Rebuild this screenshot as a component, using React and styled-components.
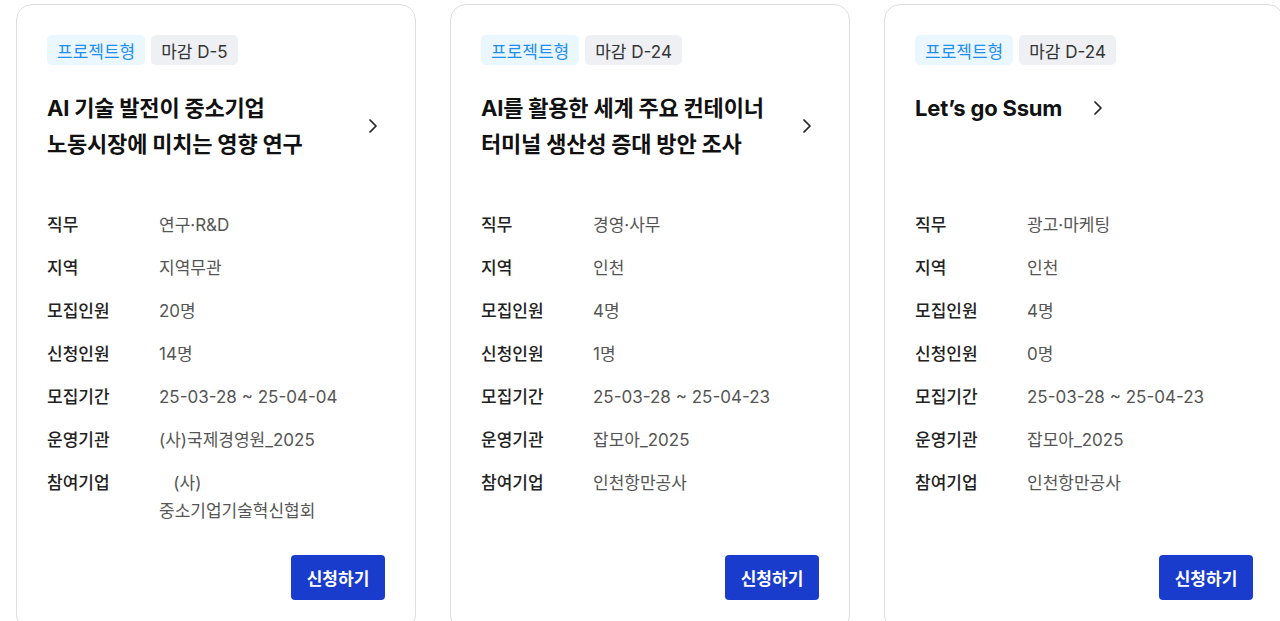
import React from 'react';
import styled, { createGlobalStyle } from 'styled-components';
import { ChevronRight } from 'lucide-react';

const GlobalStyle = createGlobalStyle`
  html, body {
    margin: 0;
    padding: 0;
    overflow: hidden;
    background: #fff;
  }
  body {
    font-family: Inter, "Noto Sans CJK KR", sans-serif;
  }
`;

const List = styled.div`
  display: flex;
  gap: 34px;
  padding: 4px 0 0 16px;
  width: 1400px;
  align-items: stretch;
`;

const Card = styled.article`
  flex: 0 0 400px;
  min-width: 0;
  box-sizing: border-box;
  border: 1px solid #dedede;
  border-radius: 16px;
  padding: 30px;
  display: flex;
  flex-direction: column;
  background: #fff;
`;

const Tags = styled.div`
  display: flex;
  gap: 6px;
`;

const Tag = styled.span`
  display: inline-flex;
  align-items: center;
  height: 30px;
  padding: 0 10px;
  border-radius: 5px;
  font-size: 17px;
  background: ${(p) => (p.$type === 'kind' ? '#ebf7ff' : '#eef0f4')};
  color: ${(p) => (p.$type === 'kind' ? '#1f8ef1' : '#333')};
`;

const TitleArea = styled.div`
  margin-top: 25px;
  min-height: 72px;
`;

const TitleRow = styled.div`
  display: flex;
  align-items: center;
  gap: 24px;
`;

const Title = styled.h3`
  margin: 0;
  width: ${(p) => (p.$multi ? '290px' : 'auto')};
  font-size: 22px;
  line-height: 36px;
  font-weight: 700;
  color: #111;
  letter-spacing: -0.2px;
`;

const Info = styled.dl`
  margin: 49px 0 0;
  display: grid;
  grid-template-columns: 112px 200px;
  row-gap: 15px;
`;

const Label = styled.dt`
  font-size: 17px;
  line-height: 28px;
  font-weight: 500;
  color: #222;
`;

const Value = styled.dd`
  margin: 0;
  font-size: 17px;
  line-height: 28px;
  color: #555;
  white-space: pre-wrap;
`;

const Footer = styled.div`
  margin-top: auto;
  padding-top: 30px;
  display: flex;
  justify-content: flex-end;
`;

const ApplyButton = styled.button`
  height: 45px;
  width: 94px;
  border: none;
  border-radius: 4px;
  background: #1a3ccc;
  color: #fff;
  font-family: inherit;
  font-size: 17px;
  font-weight: 600;
  cursor: pointer;
`;

const Chevron = styled(ChevronRight)`
  flex-shrink: 0;
  color: #222;
`;

const jobs = [
  {
    deadline: 'D-5',
    title: ['AI 기술 발전이 중소기업', '노동시장에 미치는 영향 연구'],
    info: [
      ['직무', '연구·R&D'],
      ['지역', '지역무관'],
      ['모집인원', '20명'],
      ['신청인원', '14명'],
      ['모집기간', '25-03-28 ~ 25-04-04'],
      ['운영기관', '(사)국제경영원_2025'],
      ['참여기업', '   (사)\n중소기업기술혁신협회'],
    ],
  },
  {
    deadline: 'D-24',
    title: ['AI를 활용한 세계 주요 컨테이너', '터미널 생산성 증대 방안 조사'],
    info: [
      ['직무', '경영·사무'],
      ['지역', '인천'],
      ['모집인원', '4명'],
      ['신청인원', '1명'],
      ['모집기간', '25-03-28 ~ 25-04-23'],
      ['운영기관', '잡모아_2025'],
      ['참여기업', '인천항만공사'],
    ],
  },
  {
    deadline: 'D-24',
    title: ['Let’s go Ssum'],
    info: [
      ['직무', '광고·마케팅'],
      ['지역', '인천'],
      ['모집인원', '4명'],
      ['신청인원', '0명'],
      ['모집기간', '25-03-28 ~ 25-04-23'],
      ['운영기관', '잡모아_2025'],
      ['참여기업', '인천항만공사'],
    ],
  },
];

function JobCard({ job }) {
  return (
    <Card>
      <Tags>
        <Tag $type="kind">프로젝트형</Tag>
        <Tag>마감 {job.deadline}</Tag>
      </Tags>
      <TitleArea>
        <TitleRow>
          <Title $multi={job.title.length > 1}>
            {job.title.map((line, i) => (
              <React.Fragment key={i}>
                {line}
                {i < job.title.length - 1 && <br />}
              </React.Fragment>
            ))}
          </Title>
          <Chevron size={24} strokeWidth={1.75} />
        </TitleRow>
      </TitleArea>
      <Info>
        {job.info.map(([k, v]) => (
          <React.Fragment key={k}>
            <Label>{k}</Label>
            <Value>{v}</Value>
          </React.Fragment>
        ))}
      </Info>
      <Footer>
        <ApplyButton>신청하기</ApplyButton>
      </Footer>
    </Card>
  );
}

export default function App() {
  return (
    <>
      <GlobalStyle />
      <List>
        {jobs.map((job, i) => (
          <JobCard key={i} job={job} />
        ))}
      </List>
    </>
  );
}
